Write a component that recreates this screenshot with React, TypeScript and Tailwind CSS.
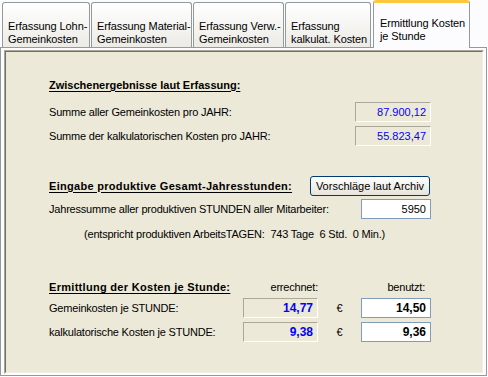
const tabs = [
  { lines: ["Erfassung Lohn-", "Gemeinkosten"], w: "w-[88px]" },
  { lines: ["Erfassung Material-", "Gemeinkosten"], w: "w-[101px]" },
  { lines: ["Erfassung Verw.-", "Gemeinkosten"], w: "w-[91px]" },
  { lines: ["Erfassung", "kalkulat. Kosten"], w: "w-[86px]" },
];

function ReadBox({ children, bold, className }: { children: React.ReactNode; bold?: boolean; className: string }) {
  return (
    <div
      className={`${className} h-[20px] flex items-center justify-end pr-[4px] border border-t-[#aca899] border-l-[#aca899] border-b-white border-r-white bg-[#ece9d8] text-[#0000ff] tracking-normal ${
        bold ? "font-bold text-[12px]" : ""
      }`}
    >
      {children}
    </div>
  );
}

function Input({ children, bold, className }: { children: React.ReactNode; bold?: boolean; className: string }) {
  return (
    <div
      className={`${className} h-[20px] flex items-center justify-end pr-[4px] border border-[#7f9db9] bg-white text-black tracking-normal ${
        bold ? "font-bold text-[12px]" : ""
      }`}
    >
      {children}
    </div>
  );
}

export default function App() {
  return (
    <div className="w-[488px] h-[377px] bg-[#fcfcfe] text-[11px] text-black font-['Liberation_Sans',Arial,sans-serif] overflow-hidden">
      {/* tab strip */}
      <div className="h-[47px] flex items-end pl-[2px] gap-[1px]">
        {tabs.map((t) => (
          <div
            key={t.lines[0]}
            className={`${t.w} h-[45px] border border-b-0 border-[#919b9c] rounded-t-[3px] bg-gradient-to-b from-white to-[#ecebe6] pt-[17px] pl-[5px] leading-[13px] whitespace-nowrap tracking-[-0.1px]`}
          >
            {t.lines.map((l) => (
              <div key={l}>{l}</div>
            ))}
          </div>
        ))}
        <div className="relative z-10 ml-px w-[97px] h-[48px] -mb-px border border-b-0 border-[#919b9c] border-t-[3px] border-t-[#ffc83c] rounded-t-[3px] bg-[#fcfcfe] pt-[14px] pl-[6px] leading-[13px] whitespace-nowrap tracking-[-0.1px]">
          <div>Ermittlung Kosten</div>
          <div>je Stunde</div>
        </div>
      </div>

      {/* tab page */}
      <div className="w-[487px] h-[329px] border border-[#919b9c] pt-[2px] pl-[3px]">
        <div className="w-[480px] h-[324px] border border-t-[#aca899] border-l-[#aca899] border-b-white border-r-white">
          <div className="h-full border border-t-[#716f64] border-l-[#716f64] border-b-[#f1efe2] border-r-[#f1efe2] bg-[#ece9d8]">
            <div className="pl-[43px] w-[425px] tracking-[-0.2px]">
              <div className="mt-[25px] h-[16px] flex items-center font-bold underline underline-offset-2 tracking-normal">
                Zwischenergebnisse laut Erfassung:
              </div>
              <div className="mt-[9px] h-[20px] flex items-center justify-between">
                <span>Summe aller Gemeinkosten pro JAHR:</span>
                <ReadBox className="w-[76px]">87.900,12</ReadBox>
              </div>
              <div className="mt-[4px] h-[20px] flex items-center justify-between">
                <span>Summe der kalkulatorischen Kosten pro JAHR:</span>
                <ReadBox className="w-[76px]">55.823,47</ReadBox>
              </div>

              <div className="mt-[30px] h-[20px] flex items-center justify-between">
                <span className="font-bold underline underline-offset-2 tracking-[0.3px]">
                  Eingabe produktive Gesamt-Jahresstunden:
                </span>
                <button className="mr-px w-[120px] h-[20px] rounded-[3px] border border-[#003c74] bg-gradient-to-b from-white to-[#e6e4da] text-[11px] leading-none tracking-normal">
                  Vorschläge laut Archiv
                </button>
              </div>
              <div className="mt-[3px] h-[20px] flex items-center justify-between">
                <span>Jahressumme aller produktiven STUNDEN aller Mitarbeiter:</span>
                <Input className="w-[70px]">5950</Input>
              </div>
              <div className="mt-[8px] h-[14px] flex items-center pl-[35px] whitespace-pre">
                (entspricht produktiven ArbeitsTAGEN:  743 Tage  6 Std.  0 Min.)
              </div>

              <div className="mt-[38px] h-[16px] grid grid-cols-[194px_75px_43px_70px] items-center">
                <span className="font-bold underline underline-offset-2 tracking-[0.3px] whitespace-nowrap">
                  Ermittlung der Kosten je Stunde:
                </span>
                <span className="text-right">errechnet:</span>
                <span />
                <span className="text-right pr-[6px]">benutzt:</span>
              </div>
              <div className="mt-[3px] h-[20px] grid grid-cols-[194px_75px_43px_70px] items-center">
                <span>Gemeinkosten je STUNDE:</span>
                <ReadBox bold className="w-[75px]">14,77</ReadBox>
                <span className="text-center">€</span>
                <Input bold className="w-[70px]">14,50</Input>
              </div>
              <div className="mt-[4px] h-[20px] grid grid-cols-[194px_75px_43px_70px] items-center">
                <span>kalkulatorische Kosten je STUNDE:</span>
                <ReadBox bold className="w-[75px]">9,38</ReadBox>
                <span className="text-center">€</span>
                <Input bold className="w-[70px]">9,36</Input>
              </div>
            </div>
          </div>
        </div>
      </div>
    </div>
  );
}
